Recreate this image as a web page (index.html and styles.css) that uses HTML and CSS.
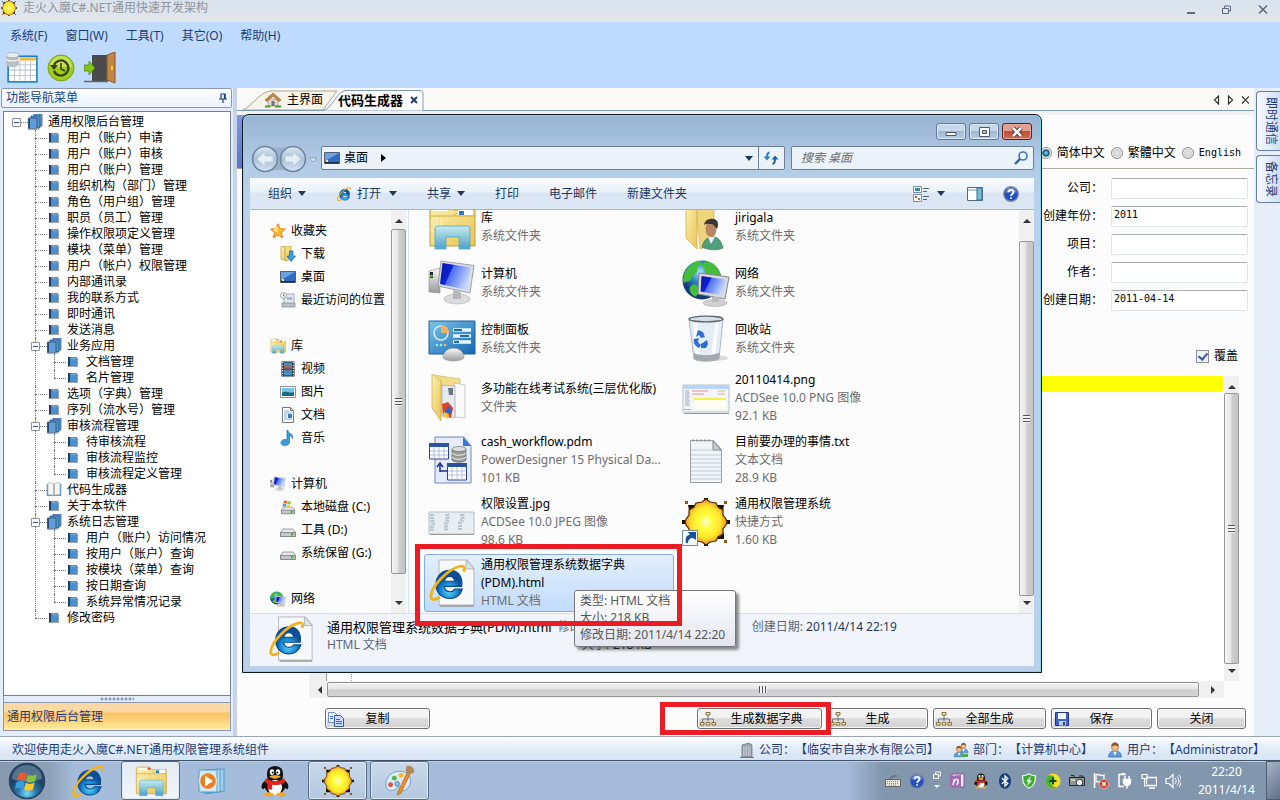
FILE: index.html
```html
<!DOCTYPE html>
<html lang="zh-CN">
<head>
<meta charset="utf-8">
<title>走火入魔C#.NET通用快速开发架构</title>
<link rel="stylesheet" href="styles.css">
</head>
<body>
<svg class="defs" aria-hidden="true">
<defs>
<radialGradient id="gSun"><stop offset="0" stop-color="#fffde0"/><stop offset=".3" stop-color="#ffff3e"/><stop offset=".7" stop-color="#ffe52a"/><stop offset=".85" stop-color="#fbb42c"/><stop offset="1" stop-color="#ee8f24"/></radialGradient>
<linearGradient id="gFolder" x2="1" y2="1"><stop offset="0" stop-color="#fdf2b0"/><stop offset="1" stop-color="#e7c455"/></linearGradient>
<linearGradient id="gGlass" x2="0" y2="1"><stop offset="0" stop-color="#c5ecf6"/><stop offset="1" stop-color="#3f9fd0"/></linearGradient>
<linearGradient id="gScreen" x2="1" y2=".4"><stop offset="0" stop-color="#0a16a8"/><stop offset=".4" stop-color="#0e22d8"/><stop offset=".42" stop-color="#4a6cf0"/><stop offset="1" stop-color="#c4d6ff"/></linearGradient>
<linearGradient id="gGrey" x2="0" y2="1"><stop offset="0" stop-color="#fafafa"/><stop offset="1" stop-color="#9a9a9a"/></linearGradient>
<radialGradient id="gGlobe" cx=".45" cy=".3"><stop offset="0" stop-color="#aee4f4"/><stop offset=".5" stop-color="#2f86c8"/><stop offset="1" stop-color="#123a7c"/></radialGradient>
<linearGradient id="gBlue" x2="1" y2="1"><stop offset="0" stop-color="#7cc4ea"/><stop offset="1" stop-color="#1566b0"/></linearGradient>
<linearGradient id="gPage" x2="1" y2="1"><stop offset="0" stop-color="#ffffff"/><stop offset="1" stop-color="#dfe3ea"/></linearGradient>
<radialGradient id="gE" cx=".5" cy=".75"><stop offset="0" stop-color="#5fd4fa"/><stop offset=".6" stop-color="#1a8ad2"/><stop offset="1" stop-color="#0b4f98"/></radialGradient>
<radialGradient id="gOrb" cx=".5" cy=".85"><stop offset="0" stop-color="#6fe0f4"/><stop offset=".5" stop-color="#2b79ad"/><stop offset="1" stop-color="#1d4468"/></radialGradient>
<linearGradient id="gNavBtn" x2="0" y2="1"><stop offset="0" stop-color="#dbe7f4"/><stop offset=".5" stop-color="#aac0d8"/><stop offset="1" stop-color="#d5e3f1"/></linearGradient>

<symbol id="sun" viewBox="0 0 48 48"><path d="M3 3h3v3H3zM42 3h3v3h-3zM3 42h3v3H3zM42 42h3v3h-3z" fill="#8a5a10"/><path d="M6 7h6v5H7zM36 7h6l-1 6h-5zM6 41v-6h6v6zM42 41h-6v-6h6zM0 22h4v4H0zM44 22h4v4h-4zM22 0h4v3h-4zM22 45h4v3h-4z" fill="#1c1204"/><path d="M24 1l4 3 6 1 2 4 5 3v5l3 4 1 3-1 3-3 4v5l-5 3-2 4-6 1-4 3-4-3-6-1-2-4-5-3v-5l-3-4-1-3 1-3 3-4v-5l5-3 2-4 6-1z" fill="url(#gSun)" stroke="#4a2c08" stroke-width="1.200"/></symbol>
<symbol id="ie" viewBox="0 0 32 32"><path d="M27 19H13.500c.3 2.700 2 4.200 4.600 4.200 1.700 0 2.900-.7 3.700-2h5.800C26 26 22.500 28.500 17.800 28.500 11.500 28.500 7 24 7 17.600S11.600 6.500 17.800 6.500C24.500 6.500 28.200 11.600 27 19zM13.600 15h8c-.3-2.400-1.700-3.700-3.900-3.700-2.200 0-3.600 1.300-4.100 3.700z" fill="url(#gE)" stroke="#0b4a8c" stroke-width=".9"/><path d="M28.500 7.500C30 4 28.500 2.500 25 3.500 16 6 3.500 19 3 26.500c-.2 3.500 3 3.500 7 1" fill="none" stroke="#f3b21a" stroke-width="2.200"/></symbol>
<symbol id="iedoc" viewBox="0 0 48 48"><path d="M11 1h28l7 8v37H11z" fill="#f7f8fa" stroke="#b3b6ba"/><path d="M38 1v9h8z" fill="#dfe2e6" stroke="#b3b6ba"/><path d="M46 47H12" stroke="#9a9a9a" stroke-width="1.500"/><use href="#ie" x="-1" y="3" width="41" height="41"/></symbol>

<symbol id="dbtable" viewBox="0 0 30 30"><rect x="2" y="4" width="27" height="24" fill="#fff" stroke="#1781bd" stroke-width="1.500"/><path d="M13 5h15v3H13z" fill="#f5b63e"/><path d="M3 12h25M3 17h25M3 22h25M8 10v17M13 8v19M18 8v19M23 8v19" stroke="#c3c8d4"/><path d="M0 3v9c1 3 11 3 12 0V3z" fill="#b9bec6"/><path d="M0 7c2 2 10 2 12 0" stroke="#fff" fill="none"/><ellipse cx="6" cy="3" rx="6" ry="2.500" fill="#e9ecf0" stroke="#9aa0aa" stroke-width=".6"/></symbol>
<symbol id="history" viewBox="0 0 28 28"><circle cx="14" cy="14" r="13" fill="#9ccc1c" stroke="#78a512"/><path d="M3 13a11 11 0 0 1 22 0z" fill="#c3e25a"/><path d="M7 17a7.500 7.500 0 1 0 0-6" fill="none" stroke="#38400c" stroke-width="2.200"/><path d="M3 11h8l-4 5z" fill="#38400c"/><path d="M14 9v6l4 2" fill="none" stroke="#38400c" stroke-width="1.600"/></symbol>
<symbol id="door" viewBox="0 0 32 32"><path d="M8 3h16v26H8z" fill="#4a4a4c"/><path d="M0 29.500h24" stroke="#666" stroke-width="1.500"/><path d="M23 3l8-3v31l-8-3z" fill="#c48443" stroke="#8a5a26"/><path d="M28 14v4" stroke="#ffcb2e" stroke-width="2"/><path d="M0 13h5V9l6 7-6 7v-4H0z" fill="#84c512" stroke="#4b850a" stroke-width=".8"/></symbol>
<symbol id="pin" viewBox="0 0 10 10"><path d="M2.500 1h5M3 1v4.500M6.500 1v4.500M7.200 1v4.500M1 6h8M5 6v4" stroke="#123c8c" stroke-width="1.200" fill="none"/></symbol>
<symbol id="books" viewBox="0 0 16 16"><path d="M7 0h8v12H7z" fill="#6aa5da" stroke="#244c74" stroke-width=".7"/><path d="M4 2h9v12H4z" fill="#5594cf" stroke="#1c426c" stroke-width=".7"/><path d="M1.500 4H10v11H1.500z" fill="#5f9dd8" stroke="#1d3f62" stroke-width=".7"/><path d="M1.500 4h1.500v11H1.500z" fill="#2a4a6c"/><path d="M1 15h11" stroke="#8b9aa8"/></symbol>
<symbol id="book" viewBox="0 0 16 16"><path d="M3 3h9v9H3z" fill="#4c8ecb"/><path d="M3 3h2v9H3z" fill="#1f3f60"/><path d="M6 4.500h5" stroke="#7fb5e2"/><path d="M2.500 12.500h10V4" stroke="#8fa0ae" fill="none"/></symbol>
<symbol id="openbook" viewBox="0 0 16 16"><path d="M.7 2h14.600v12H.7z" fill="#5c9cd4"/><path d="M2 1c3-.5 5 0 6 1 1-1 3-1.500 6-1v12c-3-.5-5 0-6 1-1-1-3-1.500-6-1z" fill="#f6f6f6" stroke="#9aa4ae" stroke-width=".6"/><path d="M8 2v12" stroke="#777"/></symbol>
<symbol id="house" viewBox="0 0 16 16"><path d="M3 7h10v7H3z" fill="#e4d9c8" stroke="#8f8271" stroke-width=".6"/><path d="M6.500 9h3v5h-3z" fill="#6d7480"/><path d="M0 8l8-7 8 7-2 1.500L8 4 2 9.500z" fill="#c98642" stroke="#8d5520" stroke-width=".6"/><path d="M0 14.500h5.500M10 14.500h6" stroke="#4c9b32" stroke-width="2"/></symbol>
<symbol id="desk" viewBox="0 0 16 16"><path d="M.5 2.500h15v11H.5z" fill="#2f6cc2" stroke="#56606e"/><path d="M1 3h14L1 11z" fill="#6ba2e4"/><path d="M1 12h14v1.500H1z" fill="#1c2c44"/><path d="M2 10h2v2H2z" fill="#ffe36e"/></symbol>
<symbol id="star" viewBox="0 0 16 16"><path d="M8 .8l2.200 4.800 5.200.5-4 3.500 1.300 5.200L8 12l-4.700 2.800 1.300-5.200-4-3.500 5.200-.5z" fill="#ffb62e" stroke="#e07a12" stroke-width=".9"/><path d="M8 3v7L3 7z" fill="#ffe08a"/></symbol>
<symbol id="down" viewBox="0 0 16 16"><path d="M1 1l5-1h5v12l-4 3-6-2z" fill="url(#gFolder)" stroke="#c39a2e" stroke-width=".7"/><path d="M5 1v13" stroke="#c8a23c"/><path d="M9.500 5h3.500v5h2.500L11.200 15.500 7 10h2.500z" fill="#39a0e4" stroke="#0f62a6" stroke-width=".7"/></symbol>
<symbol id="recent" viewBox="0 0 16 16"><path d="M4 2h10v10H4z" fill="#e6ecf2" stroke="#8a949e" stroke-width=".8"/><path d="M7 5h5v3H7z" fill="#8dbfe4"/><path d="M2 11h13v4H2z" fill="#bcc2c8" stroke="#80878e" stroke-width=".7"/><circle cx="3.500" cy="3.500" r="3" fill="#fff" stroke="#7c8790" stroke-width=".8"/><path d="M3.500 2v2H5" stroke="#444" fill="none" stroke-width=".7"/></symbol>
<symbol id="lib" viewBox="0 0 48 48"><path d="M2 6l2-3h18l3 4h22v36H2z" fill="url(#gFolder)" stroke="#c29a34"/><path d="M6 5h14v3H6zM30 7h15v5H30z" fill="#fff"/><path d="M19 4h4v3h-4z" fill="#e23b22"/><path d="M31 8h5v4h-5z" fill="#2c78c2"/><path d="M2 13h24l3-3h0M27 13h20" stroke="#d0aa3e" fill="none"/><path d="M10 31l-7-13M10 31l-2-16M10 31l4-15M10 31L1 26" stroke="#fffbe0" opacity=".7"/><path d="M7 26q0-3 3-3h29q3 0 3 3v20H31V34H18v12H7z" fill="url(#gGlass)" stroke="#4aa3cc" stroke-width=".8" opacity=".93"/></symbol>
<symbol id="film" viewBox="0 0 16 16"><path d="M1.500.5h13v15h-13z" fill="#20262c"/><path d="M4 1.500h8v6H4zM4 8.500h8v6H4z" fill="#3698d8"/><path d="M4 5l4-2 4 4v.5H4zM5 9l6 1-4 2z" fill="#b1594a"/><path d="M2.700 1v14M13.300 1v14" stroke="#eef2f4" stroke-dasharray="1.500 1.200" stroke-width="1.200"/></symbol>
<symbol id="pic" viewBox="0 0 16 16"><path d="M.5 2.500h15v11H.5z" fill="#fff" stroke="#8b9299"/><path d="M2 4h12v8H2z" fill="#78c2ec"/><path d="M2 9c4-3 7 1 12-1v4H2z" fill="#1a6a86"/></symbol>
<symbol id="doc" viewBox="0 0 16 16"><path d="M2.500.5h8l3 3v12h-11z" fill="#fbfcfd" stroke="#747b83"/><path d="M10.500.5v3h3" fill="none" stroke="#747b83"/><path d="M4 4h5M4 6h8M4 8h3M4 10h3M4 12h8" stroke="#86a4c4" stroke-width=".9"/><path d="M8 7h4v4H8z" fill="#387fb8"/></symbol>
<symbol id="music" viewBox="0 0 16 16"><path d="M8 .5c0 3 6 3.500 4.500 8-.5-2-2-3-3-3v6.500c0 4.500-8.500 4.500-8.500.8 0-2.800 3.700-4 6-2.800V.5z" fill="#3a9ce0" stroke="#1a6cae" stroke-width=".7"/></symbol>
<symbol id="pc" viewBox="0 0 48 48"><path d="M1 12l11-3v25L1 33z" fill="url(#gGrey)" stroke="#888" stroke-width=".6"/><path d="M2 13h3v6H2z" fill="#223"/><circle cx="3.500" cy="17" r="1.300" fill="#53e022"/><ellipse cx="29" cy="40" rx="13" ry="5" fill="#dcdcde" stroke="#aaa" stroke-width=".6"/><path d="M25 31l8 2v7h-8z" fill="#b8b8bc"/><path d="M13 2l33 4.500-4 27.500-32-7z" fill="#dcdde0" stroke="#8c8e92" stroke-width=".8"/><path d="M14.500 4L43 8.500l-4 22.500L12 25z" fill="url(#gScreen)"/></symbol>
<symbol id="winlogo" viewBox="0 0 20 20"><path d="M3 4c2-1.500 4-1.500 6.500 0L8 9.500C6 8 4 8 1.500 9.300z" fill="#ee5a2a"/><path d="M10.500 4.500c2.500 1.200 4.500 1 7-.3L16 9.700c-2.500 1.500-5 1.300-7 0z" fill="#86c440"/><path d="M1.200 10.500c2.300-1.400 4.500-1.200 6.500 0L6.200 16C4.500 14.800 2.500 14.700 0 15.900z" fill="#36a2e0"/><path d="M8.700 10.900c2.500 1.500 4.800 1.300 7-.1L14.300 16.300c-2.500 1.400-5 1.200-7 0z" fill="#ffc92c"/></symbol>
<symbol id="drive" viewBox="0 0 16 16"><path d="M3 7h10l2.500 3.500V14H.5v-3.500z" fill="#e6e8ea" stroke="#787c80" stroke-width=".7"/><path d="M.5 10.500h15v4H.5z" fill="#c4c8cc" stroke="#6a6e72" stroke-width=".7"/><path d="M11 11h2.500v2.500H11z" fill="#3cc41e"/></symbol>
<symbol id="driveC" viewBox="0 0 16 16"><use href="#drive" y="2" width="16" height="14"/><use href="#winlogo" x="2" y="0" width="11" height="10"/></symbol>
<symbol id="net" viewBox="0 0 48 48"><circle cx="20" cy="21" r="19.500" fill="url(#gGlobe)"/><path d="M5 10c6-8 12-9 14-7s-5 5-4 8-5 5-6 9-6 1-7 5c-2-5 0-11 3-15zM27 3c6 1 11 8 12 15-5 1-8-3-13-3s-2-5-5-7 1-6 6-5zM10 26c6-2 11 4 7 8s-2 4-5 3-7-8-2-11z" fill="#44bd3a"/><path d="M17 14l30 4-4 22-27-5z" fill="#d8dade" stroke="#85888c"/><path d="M19.500 17l24 3.500-3.500 16-21.500-4z" fill="url(#gScreen)"/><ellipse cx="33" cy="44" rx="12" ry="3.500" fill="#d0d0d4" stroke="#a0a0a4" stroke-width=".5"/><path d="M30 38h7v5h-7z" fill="#bbb"/></symbol>
<symbol id="userfolder" viewBox="0 0 48 48"><path d="M14 2h18v40l-14 4z" fill="#efd57a" stroke="#c6a748" stroke-width=".6"/><path d="M4 0l11 9v37L4 35z" fill="url(#gFolder)" stroke="#c6a748" stroke-width=".7"/><path d="M20 44c2-8 6-10 11-10s8 3 10 11c-6 3-15 2-21-1z" fill="#4f9f7c" stroke="#2c6e50" stroke-width=".6"/><path d="M26 34l3 7 4-7z" fill="#eef"/><ellipse cx="29" cy="26" rx="5.500" ry="8" fill="#b98562"/><path d="M22 22c1-8 14-8 14-1 0 3-1 4-1 5-2-3-4-5-6-5s-5-1-7 1z" fill="#3a3634"/></symbol>
<symbol id="panel" viewBox="0 0 48 48"><path d="M1 6h46v33H1z" fill="url(#gBlue)" stroke="#1b619c"/><circle cx="13" cy="18" r="7" fill="none" stroke="#d9effc" stroke-width="1.500"/><path d="M13 18V10a8 8 0 0 1 8 8z" fill="#f5b05a"/><path d="M25 15h18M25 21h18M25 27h18" stroke="#e8f6ff" stroke-width="3.500"/><path d="M26 15h8M32 21h9M26 27h5" stroke="#1e6cb4" stroke-width="2"/><circle cx="9" cy="30" r="1.300" fill="#7ff0ff"/><circle cx="13" cy="30" r="1.300" fill="#7ff0ff"/><circle cx="17" cy="30" r="1.300" fill="#ffb55a"/><path d="M15 43c0-13 21-13 21 0-4 4-17 4-21 0z" fill="url(#gGrey)" stroke="#999" stroke-width=".6"/></symbol>
<symbol id="bin" viewBox="0 0 48 48"><ellipse cx="33" cy="43" rx="13" ry="3" fill="#ccc" opacity=".7"/><path d="M7 4h34l-4 40c-6 3-20 3-25 0z" fill="#e4edf6" stroke="#aeb7bf"/><path d="M13 8l3 34M35 8l-4 34" stroke="#fff" stroke-width="4" opacity=".8"/><path d="M12 38c6 3 20 3 26-1l-1 7c-6 3-20 3-25 0z" fill="#a5a9ae"/><ellipse cx="24" cy="4" rx="17" ry="2.800" fill="#d7e0e8" stroke="#5d646c" stroke-width="1.300"/><path d="M16 15l5 2 2 5-4 1-2-3-3 2zM12 24l5-1-1 4 3 3-2 3c-4-2-6-5-5-9zM19 33v-4l6-4 1 4-2 4z" fill="#2f6fd0"/></symbol>
<symbol id="appfolder" viewBox="0 0 48 48"><path d="M6 1l26 4v34H12z" fill="#f3dc88" stroke="#c9aa4e" stroke-width=".6"/><path d="M26 9l11 2v33l-10-1z" fill="#fafafa" stroke="#b5b8bc" stroke-width=".7"/><path d="M14 11l13 1v32l-13-2z" fill="#e6e9ed" stroke="#9ea3aa" stroke-width=".7"/><path d="M20 14h5v7h-4z" fill="#6c7480"/><path d="M14 30l6-2 5 6-2 10-8-4z" fill="#e0402e"/><path d="M20 32l4 4-3 6-4-4z" fill="#2b62c4"/><path d="M16 38l5 2-1 5-5-3z" fill="#ffc42a"/><path d="M4 0l9 7v40L4 34z" fill="url(#gFolder)" stroke="#c9aa4e" stroke-width=".7"/></symbol>
<symbol id="pngshot" viewBox="0 0 48 48"><path d="M1 11h46v27H1z" fill="#f3f5f8" stroke="#b4c0ce"/><path d="M1 11h46v4H1z" fill="#b8d4f6"/><path d="M3 17h4M3 19h5M3 21h4M3 23h5M3 25h4M3 27h5M3 29h4M3 31h5" stroke="#8d98a6" stroke-width=".8"/><path d="M10 17h16M10 20h12" stroke="#e06464" opacity=".7"/><path d="M12 25h32" stroke="#f4ee16" stroke-width="1.500"/><path d="M12 26h32v9H12z" fill="#fffef2"/><path d="M36 17h7M36 20h7M1 35.500h8" stroke="#c9b99c"/><path d="M2 39.500h45" stroke="#999"/></symbol>
<symbol id="pdm" viewBox="0 0 48 48"><path d="M7 1h29l7 9v37H7z" fill="#e4ecfb" stroke="#7186ba"/><path d="M35 1v9h8z" fill="#3778d0"/><g fill="#fff" stroke="#2a3f9c"><path d="M1.500 8h19v15h-19zM19.500 28h19v16h-19z"/></g><path d="M1 7h20v4H1zM19 27h20v4H19z" fill="#2a559e"/><path d="M2 15h18M2 19h18M6 11v12M11 11v12M16 11v12M20 35h18M20 39h18M24 31v13M29 31v13M34 31v13" stroke="#a6aed8" stroke-width=".8"/><path d="M12 36V29M9 31l3-4 3 4M12 35h7" stroke="#1b2d96" fill="none" stroke-width="1.500"/><path d="M24 13v11c2 3 12 3 14 0V13z" fill="#9a9a98" stroke="#555" stroke-width=".6"/><ellipse cx="31" cy="13" rx="7" ry="2.500" fill="#dedede" stroke="#666" stroke-width=".6"/><path d="M24 17c2 3 12 3 14 0M24 21c2 3 12 3 14 0" fill="none" stroke="#f2f2f2"/></symbol>
<symbol id="txt" viewBox="0 0 48 48"><path d="M8.500 4.500h23l8 9v33h-31z" fill="#f2f5f8" stroke="#9aa0a6"/><path d="M31 5v9h8z" fill="#cbd0d6" stroke="#7f858b"/><path d="M10 4.500h20" stroke="#999" stroke-dasharray="2 2" stroke-width="2"/><path d="M9 14h22M9 19h30M9 23h30M9 27h30M9 31h30M9 35h30M9 39h30M9 43h30" stroke="#bccbdb"/></symbol>
<symbol id="jpgshot" viewBox="0 0 48 48"><path d="M1 14h45v22H1z" fill="#e7edf1" stroke="#b6bfc8"/><path d="M4 16v5l1 5-1 3v4M19 16l1 5-2 5v7M34 16l1 5-3 4v7" stroke="#b8c2ca" stroke-width="4" stroke-dasharray="2 1" fill="none"/><path d="M2 36.500h44" stroke="#999"/></symbol>
<symbol id="shortcut" viewBox="0 0 48 48"><use href="#sun" width="48" height="48"/><path d="M.5 32.500h15v15H.5z" fill="#f4f7fb" stroke="#7a8896"/><path d="M4 45c-1-6 1-8 4-8l-2-3h8v8l-3-2c-3 0-5 2-5 5z" fill="#174f9c"/></symbol>
<symbol id="copy" viewBox="0 0 16 16"><path d="M.5 1.500h6l3 3v7h-9z" fill="#eaf1fd" stroke="#6d8fd0"/><path d="M6.500 4.500h6l3 3v8h-9z" fill="#c9dafa" stroke="#2e58b2"/><path d="M8 8.500h4M8 10.500h6M8 12.500h6M2 5.500h3M2 7.500h3" stroke="#3a68c4"/></symbol>
<symbol id="org" viewBox="0 0 16 16"><path d="M8 4v6M2.500 11V8h11v3" fill="none" stroke="#677"/><g fill="#fff0a0" stroke="#6b5420" stroke-width=".8"><path d="M6 1.500h4v2.500H6zM.5 11.500h3.500v2.500H.5zM6.200 11.500h3.600v2.500H6.200zM12 11.500h3.500v2.500H12z"/></g></symbol>
<symbol id="save" viewBox="0 0 16 16"><path d="M1.500 1.500h13v13h-13z" fill="#3f62cc" stroke="#1d3584"/><path d="M4 2h8v6H4z" fill="#f2f6ff"/><path d="M5 10h7v4.500H5z" fill="#c5cee0"/><path d="M9 11h2v3H9z" fill="#233f8c"/></symbol>
<symbol id="building" viewBox="0 0 16 16"><path d="M3 3l7-2 3 2v12H3z" fill="#9aa2ae" stroke="#66707c" stroke-width=".7"/><path d="M4 5h8M4 7h8M4 9h8M4 11h8M4 13h8" stroke="#dfe5ee" stroke-dasharray="1.500 1"/><path d="M1 15.500h14" stroke="#777"/></symbol>
<symbol id="person" viewBox="0 0 16 16"><path d="M1.500 15c.5-5 3-6 6.500-6s6 1 6.500 6z" fill="#5c9fdf" stroke="#2c659c" stroke-width=".7"/><path d="M6 9.500l2 4 2-4z" fill="#fff"/><ellipse cx="8" cy="5" rx="3.300" ry="4.200" fill="#f0bd8a" stroke="#8c5a30" stroke-width=".6"/><path d="M4.500 4.500C4-.5 12-.5 11.500 4.500 10 3 6 3 4.500 4.500z" fill="#8a5024"/></symbol>
<symbol id="people" viewBox="0 0 16 16"><use href="#person" x="5" y="0" width="11" height="12"/><use href="#person" x="0" y="3" width="12" height="13"/><path d="M9 12h6v3H9z" fill="#4faa42"/></symbol>
<symbol id="orb" viewBox="0 0 38 38"><circle cx="19" cy="19" r="17.500" fill="url(#gOrb)" stroke="#27435e" stroke-width="1.500"/><path d="M4 17a15 14 0 0 1 30 0c-8 3-22 3-30 0z" fill="#fff" opacity=".25"/><use href="#winlogo" x="7" y="7" width="25" height="25"/></symbol>
<symbol id="wmp" viewBox="0 0 32 32"><path d="M10 5l18-1v22l-18 3z" fill="#9fd0ea" stroke="#4e9cc6"/><path d="M7 5l17-1v23L7 28z" fill="#b8def0" stroke="#4e9cc6"/><path d="M3 5h18v22H3z" fill="#cfe9f5" stroke="#4e9cc6"/><circle cx="12" cy="16" r="8.500" fill="#f07c1c" stroke="#d8e8f0" stroke-width="1.500"/><path d="M9 10.500l8 5.500L9 21.500z" fill="#fff"/></symbol>
<symbol id="qq" viewBox="0 0 32 34"><path d="M6 16C1 20 1 24 3 26l4-3M26 16c5 4 5 8 3 10l-4-3" fill="#111"/><ellipse cx="16" cy="22" rx="11" ry="10" fill="#151515"/><ellipse cx="16" cy="24" rx="7.500" ry="8" fill="#fff"/><path d="M16 1c-6 0-8.500 4-8.500 8 0 3 0 5 1.500 7h14c1.500-2 1.500-4 1.500-7 0-4-2.500-8-8.500-8z" fill="#151515"/><ellipse cx="12.800" cy="7.500" rx="2.300" ry="3" fill="#fff"/><ellipse cx="19.200" cy="7.500" rx="2.300" ry="3" fill="#fff"/><circle cx="13.500" cy="8" r="1"/><circle cx="18.500" cy="8" r="1"/><path d="M10 12c3-1.500 9-1.500 12 0-2 3.500-10 3.500-12 0z" fill="#f9a91c"/><path d="M6 14c6 4 14 4 20 0l1 4c-5 3-9 4-14 3v5H8v-6l-3-2z" fill="#e2231c"/><path d="M4 32c0-4 9-4 11-1-1 3-9 3-11 1zM28 32c0-4-9-4-11-1 1 3 9 3 11 1z" fill="#f9a91c"/></symbol>
<symbol id="paint" viewBox="0 0 34 34"><path d="M2 22C1 11 11 5 20 7c8 2 10 10 7 15-4 7-9 6-9 3s-3-3-5 0-10 4-11-3z" fill="#dceaf4" stroke="#6a9cc0"/><circle cx="7" cy="21" r="2.600" fill="#e05038"/><circle cx="11" cy="14" r="2.600" fill="#57b447"/><circle cx="18" cy="11" r="2.600" fill="#f4b52c"/><circle cx="14" cy="20" r="2.500" fill="#8cc3e8" stroke="#4a88b8"/><path d="M29 7l-11 23-4 2 1-4L26 5z" fill="#e88c2c" stroke="#a85c14" stroke-width=".6"/><path d="M24 1c4-1 9 2 8 7l-6 2-3-4z" fill="#b5855a"/></symbol>
<symbol id="kbd" viewBox="0 0 16 16"><path d="M.5 6.500h15v7H.5z" fill="#e8e4da" stroke="#666"/><path d="M2 8.500h12M2 10.500h12M4 12h8" stroke="#888" stroke-dasharray="1 1"/><path d="M5 6c0-3 3-1 3-3h4" stroke="#555" fill="none"/></symbol>
<symbol id="help" viewBox="0 0 16 16"><circle cx="8" cy="8" r="7.300" fill="#244fc0" stroke="#808a9c" stroke-width="1.400"/><path d="M2.500 6.500a5.500 5 0 0 1 11 0z" fill="#7f9ee8" opacity=".7"/><path d="M5.500 6.300c0-3.300 5-3.300 5-.3 0 2-2.400 1.900-2.400 3.900M8 11.200v1.600" stroke="#fff" stroke-width="1.800" fill="none"/></symbol>
<symbol id="note" viewBox="0 0 16 16"><path d="M3 1h12v13H3z" fill="#f4e9f6" stroke="#8a5a98"/><path d="M1 3l11-1v13L1 14z" fill="#a46ab2"/><path d="M4 12l1.500-6M5 9c2-4 5-3 4 0l-1 3" stroke="#fff" fill="none" stroke-width="1.500"/></symbol>
<symbol id="bt" viewBox="0 0 16 16"><ellipse cx="8" cy="8" rx="6" ry="7.800" fill="#143c7a"/><path d="M4.800 5l6 5.500L8 13V3l2.800 2.500-6 5.500" stroke="#fff" stroke-width="1.300" fill="none"/></symbol>
<symbol id="shield" viewBox="0 0 16 16"><path d="M8 .8c2 1.500 4 2 6.500 2 0 6-1 9.500-6.500 12.500C2.500 12.300 1.500 8.800 1.500 2.800 4 2.800 6 2.300 8 .8z" fill="#3cae2c" stroke="#e8f4e4" stroke-width="1.300"/><path d="M10 3L5 8.500h2.500L6 13l5-5.500H8.500z" fill="#fff"/></symbol>
<symbol id="plus" viewBox="0 0 16 16"><circle cx="8" cy="8" r="7.500" fill="#f6df22"/><path d="M.5 8a7.500 7.500 0 0 0 12 5.800C8 15 4 11 8 8s0-7-5-5.500A7.500 7.500 0 0 0 .5 8z" fill="#4db32e"/><path d="M8 4.500v7M4.500 8h7" stroke="#15480e" stroke-width="2"/></symbol>
<symbol id="cam" viewBox="0 0 16 16"><path d="M.5 4.500h15v8H.5zM2 2.500h3v2M10 3h4v1.500" fill="#8e9492" stroke="#23282a"/><circle cx="10.500" cy="9.500" r="3.300" fill="#eee" stroke="#333"/><path d="M2 7h4" stroke="#fff"/></symbol>
<symbol id="flag" viewBox="0 0 16 16"><path d="M1.500 0v15" stroke="#fff" stroke-width="1.500"/><path d="M3 2c3-2 4 2 8 0v7c-4 2-5-2-8 0z" fill="none" stroke="#fff" stroke-width="1.300"/><circle cx="11" cy="11" r="4.700" fill="#d63822" stroke="#f6c5bd" stroke-width=".7"/><path d="M9 9l4 4M13 9l-4 4" stroke="#fff" stroke-width="1.500"/></symbol>
<symbol id="plug" viewBox="0 0 16 16"><path d="M9 1.500H2v12h5M4 .7h4" fill="none" stroke="#fff" stroke-width="1.500"/><path d="M6.500 6.500h7v3l-1.500 2.500h-4L6.500 9.500zM8 3v3M12 3v3M10 12v3.500" fill="#fff" stroke="#fff" stroke-width="1.400"/></symbol>
<symbol id="lan" viewBox="0 0 16 16"><path d="M5.500 4.500h10v8h-10zM8 15h6" fill="none" stroke="#fff" stroke-width="1.300"/><path d="M1 1.500h5v4H1zM3.500 5.500V13H6" fill="#8396ae" stroke="#fff" stroke-width="1.200"/></symbol>
<symbol id="vol" viewBox="0 0 16 16"><path d="M1 5.500h3l4-4v13l-4-4H1z" fill="none" stroke="#fff" stroke-width="1.200"/><path d="M10 5c1.500 1.500 1.500 4.500 0 6M12 3.500c2.500 2.500 2.500 6.500 0 9M14 2c3 4 3 8 0 12" stroke="#fff" fill="none"/></symbol>
<symbol id="views" viewBox="0 0 16 16"><g fill="#fff" stroke="#7d8ea0"><path d="M.5.5h8v6h-8zM.5 8.500h8v7h-8z"/></g><path d="M2 2h5v3H2z" fill="#2c8ca8"/><path d="M2 10h2v2H2z" fill="#d33"/><path d="M5 12h2v2H5z" fill="#5a2"/><path d="M10 2.500h6M10 5.500h4M10 10.500h6M10 13.500h4" stroke="#52606e"/></symbol>
<symbol id="pane" viewBox="0 0 16 16"><path d="M.5 1.500h15v13H.5z" fill="#fff" stroke="#54687c"/><path d="M1 4h9" stroke="#7f94a8"/><path d="M10 2h5v12h-5z" fill="#73bcd8" stroke="#32708e"/></symbol>
<symbol id="refresh" viewBox="0 0 16 16"><path d="M6.500 2.500C4 3 4 5 4 7" fill="none" stroke="#2d84c6" stroke-width="2"/><path d="M.5 6.500h7L4 10.500z" fill="#2d84c6"/><path d="M9.500 14c2.500-.5 2.500-2.500 2.500-5" fill="none" stroke="#1b65a8" stroke-width="2"/><path d="M8.500 9.500h7L12 5.500z" fill="#1b65a8"/></symbol>
<symbol id="mag" viewBox="0 0 16 16"><circle cx="10" cy="6" r="4" fill="#eaf4fc" stroke="#3878c0" stroke-width="1.600"/><path d="M7 9l-5 5" stroke="#2863ae" stroke-width="2.400"/></symbol>
</defs>
</svg>

<div class="screen">
<header class="titlebar"><svg class="i16"><use href="#sun"/></svg><span class="title">走火入魔C#.NET通用快速开发架构</span>
<span class="winctl"><button aria-label="最小化"><svg viewBox="0 0 12 12"><path d="M2 9h8" stroke-width="2"/></svg></button><button aria-label="还原"><svg viewBox="0 0 12 12"><path d="M3.500 4V2h6v5H8M1.500 4.500h6v5h-6z"/></svg></button><button aria-label="关闭"><svg viewBox="0 0 12 12"><path d="M2 1.500l8 8M10 1.500l-8 8" stroke-width="1.600"/></svg></button></span></header>
<nav class="menubar"><button>系统(F)</button><button>窗口(W)</button><button>工具(T)</button><button>其它(O)</button><button>帮助(H)</button></nav>
<div class="toolbar"><button aria-label="数据表"><svg><use href="#dbtable"/></svg></button><button aria-label="历史"><svg><use href="#history"/></svg></button><button aria-label="退出"><svg><use href="#door"/></svg></button></div>

<div class="main">
<aside class="sidebar">
<div class="side-head"><span>功能导航菜单</span><svg><use href="#pin"/></svg></div>
<div class="tree">
<ul class="root"><li><div class="row"><i class="exp"></i><svg><use href="#books"/></svg><span>通用权限后台管理</span></div>
<ul>
<li><div class="row"><svg><use href="#book"/></svg><span>用户（账户）申请</span></div></li>
<li><div class="row"><svg><use href="#book"/></svg><span>用户（账户）审核</span></div></li>
<li><div class="row"><svg><use href="#book"/></svg><span>用户（账户）管理</span></div></li>
<li><div class="row"><svg><use href="#book"/></svg><span>组织机构（部门）管理</span></div></li>
<li><div class="row"><svg><use href="#book"/></svg><span>角色（用户组）管理</span></div></li>
<li><div class="row"><svg><use href="#book"/></svg><span>职员（员工）管理</span></div></li>
<li><div class="row"><svg><use href="#book"/></svg><span>操作权限项定义管理</span></div></li>
<li><div class="row"><svg><use href="#book"/></svg><span>模块（菜单）管理</span></div></li>
<li><div class="row"><svg><use href="#book"/></svg><span>用户（帐户）权限管理</span></div></li>
<li><div class="row"><svg><use href="#book"/></svg><span>内部通讯录</span></div></li>
<li><div class="row"><svg><use href="#book"/></svg><span>我的联系方式</span></div></li>
<li><div class="row"><svg><use href="#book"/></svg><span>即时通讯</span></div></li>
<li><div class="row"><svg><use href="#book"/></svg><span>发送消息</span></div></li>
<li><div class="row"><i class="exp"></i><svg><use href="#books"/></svg><span>业务应用</span></div>
<ul>
<li><div class="row"><svg><use href="#book"/></svg><span>文档管理</span></div></li>
<li><div class="row"><svg><use href="#book"/></svg><span>名片管理</span></div></li>
</ul></li>
<li><div class="row"><svg><use href="#book"/></svg><span>选项（字典）管理</span></div></li>
<li><div class="row"><svg><use href="#book"/></svg><span>序列（流水号）管理</span></div></li>
<li><div class="row"><i class="exp"></i><svg><use href="#books"/></svg><span>审核流程管理</span></div>
<ul>
<li><div class="row"><svg><use href="#book"/></svg><span>待审核流程</span></div></li>
<li><div class="row"><svg><use href="#book"/></svg><span>审核流程监控</span></div></li>
<li><div class="row"><svg><use href="#book"/></svg><span>审核流程定义管理</span></div></li>
</ul></li>
<li><div class="row"><svg><use href="#openbook"/></svg><span>代码生成器</span></div></li>
<li><div class="row"><svg><use href="#book"/></svg><span>关于本软件</span></div></li>
<li><div class="row"><i class="exp"></i><svg><use href="#books"/></svg><span>系统日志管理</span></div>
<ul>
<li><div class="row"><svg><use href="#book"/></svg><span>用户（账户）访问情况</span></div></li>
<li><div class="row"><svg><use href="#book"/></svg><span>按用户（账户）查询</span></div></li>
<li><div class="row"><svg><use href="#book"/></svg><span>按模块（菜单）查询</span></div></li>
<li><div class="row"><svg><use href="#book"/></svg><span>按日期查询</span></div></li>
<li><div class="row"><svg><use href="#book"/></svg><span>系统异常情况记录</span></div></li>
</ul></li>
<li><div class="row"><svg><use href="#book"/></svg><span>修改密码</span></div></li>
</ul></li></ul>
</div>
<div class="grip"></div>
<button class="side-tab">通用权限后台管理</button>
</aside>

<section class="center">
<div class="tabs">
<svg class="tabshape" viewBox="0 0 192 23"><path d="M6 22C16 17 24 3 34 3h66L86 22z" fill="#f7f5ea" stroke="#aaa793"/><path d="M0 22.500h86C96 20 100 2.500 109 2.500h74q3 0 3 3v17" fill="#fdfdfb" stroke="#7d9dbd"/></svg>
<button class="tab"><svg class="i16"><use href="#house"/></svg>主界面</button>
<button class="tab on">代码生成器<svg class="x" viewBox="0 0 8 8"><path d="M1 1l6 6M7 1L1 7" stroke="#24406c" stroke-width="2"/></svg></button>
<span class="tabctl"><svg viewBox="0 0 36 10"><path d="M5.500 1v8l-4-4zM15.500 1v8l4-4zM29 1.500l7 7M36 1.500l-7 7" fill="none" stroke="#333" stroke-width="1.200"/></svg></span>
</div>
<div class="form">
<div class="form-top"><div class="banner"></div>
<div class="radios"><label><input type="radio" name="lang" checked>简体中文</label><label><input type="radio" name="lang">繁體中文</label><label><input type="radio" name="lang"><span class="mono">English</span></label></div></div>
<div class="fields">
<label for="f1">公司：</label><input id="f1" type="text">
<label for="f2">创建年份：</label><input id="f2" type="text" value="2011">
<label for="f3">项目：</label><input id="f3" type="text">
<label for="f4">作者：</label><input id="f4" type="text">
<label for="f5">创建日期：</label><input id="f5" type="text" value="2011-04-14">
</div>
<div class="cover"><label><input type="checkbox" checked>覆盖</label></div>
<div class="editor">
<div class="code"><div class="gutter"></div><div class="lines"><div class="hl"></div></div></div>
<div class="sb v ed"><i class="up"></i><b></b><i class="dn"></i></div>
<div class="sb h"><i class="lt"></i><b></b><i class="rt"></i></div>
</div>
<div class="actions">
<button class="btn w105"><svg class="i16"><use href="#copy"/></svg><span>复制</span></button><span class="grow"></span>
<button class="btn w125"><svg class="i16"><use href="#org"/></svg><span>生成数据字典</span></button>
<button class="btn w101"><svg class="i16"><use href="#org"/></svg><span>生成</span></button>
<button class="btn w113"><svg class="i16"><use href="#org"/></svg><span>全部生成</span></button>
<button class="btn w101"><svg class="i16"><use href="#save"/></svg><span>保存</span></button>
<button class="btn w89"><span>关闭</span></button>
</div>
</div>
</section>
<aside class="dock"><button>即时通信</button><button>备忘录</button></aside>
</div>

<footer class="status"><span>欢迎使用走火入魔C#.NET通用权限管理系统组件</span><span class="grow"></span>
<span class="st"><svg class="i16"><use href="#building"/></svg>公司：【临安市自来水有限公司】</span>
<span class="st"><svg class="i16"><use href="#people"/></svg>部门：【计算机中心】</span>
<span class="st"><svg class="i16"><use href="#person"/></svg>用户：【Administrator】</span></footer>

<div class="taskbar">
<button class="task" aria-label="开始"><svg class="i38"><use href="#orb"/></svg></button>
<button class="task ie" aria-label="Internet Explorer"><svg class="i36"><use href="#ie"/></svg></button>
<button class="task act cur" aria-label="资源管理器"><svg><use href="#lib"/></svg></button>
<button class="task" aria-label="播放器"><svg><use href="#wmp"/></svg></button>
<button class="task" aria-label="QQ"><svg><use href="#qq"/></svg></button>
<button class="task act" aria-label="开发架构"><svg><use href="#sun"/></svg></button>
<button class="task act" aria-label="画图"><svg><use href="#paint"/></svg></button>
<span class="grow"></span>
<div class="tray"><svg><use href="#kbd"/></svg><svg><use href="#help"/></svg><svg class="lang" viewBox="0 0 8 20"><path d="M2.500 3V1h5v4H6M.5 3.500h5v4h-5z" fill="none" stroke="#fff"/><path d="M1 14h6l-3 3z" fill="#fff"/></svg><svg><use href="#note"/></svg><svg><use href="#qq"/></svg><svg><use href="#bt"/></svg><svg><use href="#shield"/></svg><svg><use href="#plus"/></svg><svg><use href="#cam"/></svg><svg><use href="#flag"/></svg><svg><use href="#plug"/></svg><svg><use href="#lan"/></svg><svg><use href="#vol"/></svg></div>
<div class="clock">22:20<br>2011/4/14</div><div class="peek"></div>
</div>

<section class="explorer">
<div class="xtitle"><button aria-label="最小化"><svg viewBox="0 0 12 12"><path d="M1 6.500h10v3H1z" fill="#fff" stroke="#4c5a6c"/></svg></button><button aria-label="最大化"><svg viewBox="0 0 12 12"><path d="M1.500 1.500h10v9h-10z" fill="#fff" stroke="#4c5a6c"/><path d="M4.500 4.500h4v3h-4z" fill="#a9bdd4" stroke="#4c5a6c"/></svg></button><button class="close" aria-label="关闭"><svg viewBox="0 0 12 12"><path d="M2 2l8 8M10 2l-8 8" stroke="#5b3030" stroke-width="4.500"/><path d="M2 2l8 8M10 2l-8 8" stroke="#fff" stroke-width="2.500"/></svg></button></div>
<div class="xnav">
<svg class="backfwd" viewBox="0 0 66 28"><path d="M14 1q14 4 28 0v26q-14-4-28 0z" fill="#98b0ca"/><circle cx="14" cy="14" r="12.500" fill="url(#gNavBtn)" stroke="#6c839e" stroke-width="1.500"/><circle cx="42" cy="14" r="12.500" fill="url(#gNavBtn)" stroke="#6c839e" stroke-width="1.500"/><path d="M6 14l8-7v4h8v6h-8v4zM50 14l-8-7v4h-8v6h8v4z" fill="#e6eef6" stroke="#b8cadc" stroke-width=".7"/><path d="M58 13h8l-4 4z" fill="#d7e4f2" stroke="#8198b4" stroke-width=".8"/></svg>
<div class="addr"><svg class="i16"><use href="#desk"/></svg><span>桌面</span><i class="ar"></i><span class="grow"></span><i class="ad"></i><button aria-label="刷新"><svg class="i16"><use href="#refresh"/></svg></button></div>
<div class="search"><input type="text" placeholder="搜索 桌面" aria-label="搜索"><svg class="i16"><use href="#mag"/></svg></div>
</div>
<div class="xtool"><button>组织<i class="ad"></i></button><button class="open"><svg class="i16"><use href="#ie"/></svg>打开<i class="ad wide"></i></button><button>共享<i class="ad"></i></button><button>打印</button><button>电子邮件</button><button>新建文件夹</button><span class="grow"></span><button aria-label="视图"><svg class="i16"><use href="#views"/></svg><i class="ad wide"></i></button><button class="p1" aria-label="预览"><svg class="i16"><use href="#pane"/></svg></button><button class="p2" aria-label="帮助"><svg class="i16"><use href="#help"/></svg></button></div>
<div class="xbody">
<div class="places">
<ul><li class="h"><svg><use href="#star"/></svg>收藏夹</li><li><svg><use href="#down"/></svg>下载</li><li><svg><use href="#desk"/></svg>桌面</li><li><svg><use href="#recent"/></svg>最近访问的位置</li></ul>
<ul><li class="h"><svg><use href="#lib"/></svg>库</li><li><svg><use href="#film"/></svg>视频</li><li><svg><use href="#pic"/></svg>图片</li><li><svg><use href="#doc"/></svg>文档</li><li><svg><use href="#music"/></svg>音乐</li></ul>
<ul><li class="h"><svg><use href="#pc"/></svg>计算机</li><li><svg><use href="#driveC"/></svg>本地磁盘 (C:)</li><li><svg><use href="#drive"/></svg>工具 (D:)</li><li><svg><use href="#drive"/></svg>系统保留 (G:)</li></ul>
<ul><li class="h"><svg><use href="#net"/></svg>网络</li></ul>
</div>
<div class="sb v pl"><i class="up"></i><b></b><i class="dn"></i></div>
<div class="files"><div class="grid">
<div class="f"><svg><use href="#lib"/></svg><p>库<small>系统文件夹</small></p></div>
<div class="f"><svg><use href="#userfolder"/></svg><p>jirigala<small>系统文件夹</small></p></div>
<div class="f"><svg><use href="#pc"/></svg><p>计算机<small>系统文件夹</small></p></div>
<div class="f"><svg><use href="#net"/></svg><p>网络<small>系统文件夹</small></p></div>
<div class="f"><svg><use href="#panel"/></svg><p>控制面板<small>系统文件夹</small></p></div>
<div class="f"><svg><use href="#bin"/></svg><p>回收站<small>系统文件夹</small></p></div>
<div class="f"><svg><use href="#appfolder"/></svg><p>多功能在线考试系统(三层优化版)<small>文件夹</small></p></div>
<div class="f"><svg><use href="#pngshot"/></svg><p>20110414.png<small>ACDSee 10.0 PNG 图像</small><small>92.1 KB</small></p></div>
<div class="f"><svg><use href="#pdm"/></svg><p>cash_workflow.pdm<small>PowerDesigner 15 Physical Da...</small><small>101 KB</small></p></div>
<div class="f"><svg><use href="#txt"/></svg><p>目前要办理的事情.txt<small>文本文档</small><small>28.9 KB</small></p></div>
<div class="f"><svg><use href="#jpgshot"/></svg><p>权限设置.jpg<small>ACDSee 10.0 JPEG 图像</small><small>98.6 KB</small></p></div>
<div class="f"><svg><use href="#shortcut"/></svg><p>通用权限管理系统<small>快捷方式</small><small>1.60 KB</small></p></div>
<div class="f sel"><svg><use href="#iedoc"/></svg><p>通用权限管理系统数据字典<br>(PDM).html<small>HTML 文档</small></p></div>
</div></div>
<div class="sb v fl"><i class="up"></i><b></b><i class="dn"></i></div>
</div>
<div class="xinfo"><svg><use href="#iedoc"/></svg><div class="dname"><strong>通用权限管理系统数据字典(PDM).html</strong><span>HTML 文档</span></div><div class="dmeta"><span>修改日期:</span><em>2011/4/14 22:20</em><span>大小:</span><em>218 KB</em></div><div class="dmade">创建日期: <em>2011/4/14 22:19</em></div></div>
</section>
<div class="tip" role="tooltip">类型: HTML 文档<br>大小: 218 KB<br>修改日期: 2011/4/14 22:20</div>
<div class="mark m1"></div>
<div class="mark m2"></div>
</div>
</body>
</html>
```
FILE: styles.css
```css
* { box-sizing: border-box; }
body { margin: 0; font: 12px/16px "Noto Sans", "Noto Sans CJK SC", sans-serif; color: #000; text-spacing-trim: space-all; }
button, input { font: inherit; color: inherit; text-spacing-trim: inherit; }
button { border: 0; padding: 0; background: none; white-space: nowrap; }
ul { list-style: none; margin: 0; padding: 0; }
svg { flex: none; display: block; }
em, i { font-style: normal; }
.defs { position: absolute; width: 0; height: 0; }
.i16 { width: 16px; height: 16px; }
.grow { flex: 1; }
.screen { position: relative; height: 100vh; min-height: 600px; overflow: hidden; display: flex; flex-direction: column; background: #bfdbff; }

.titlebar { height: 22px; flex: none; display: flex; align-items: center; padding: 0 11px 6px 1px; background: linear-gradient(#d9e3ee, #e3e6ec); color: #8f959d; }
.titlebar .title { margin-left: 6px; flex: 1; }
.winctl { display: flex; gap: 24px; padding-top: 4px; }
.winctl svg { width: 12px; height: 12px; fill: none; stroke: #5d6b7c; }
.menubar { height: 26px; flex: none; display: flex; gap: 18px; padding: 1px 10px 0; color: #1d3c73; }
.toolbar { height: 40px; flex: none; display: flex; gap: 11px; padding: 3px 6px; }
.toolbar svg { width: 32px; height: 32px; }
.toolbar button:nth-child(2) svg { width: 28px; margin-left: -2px; margin-right: -2px; }

.main { flex: 1; min-height: 0; display: flex; background: #e6eefa; }
.sidebar { width: 233px; flex: none; display: flex; flex-direction: column; padding: 0 1px; background: #e3ecf9; }
.side-head { height: 20px; flex: none; display: flex; align-items: center; justify-content: space-between; border: 1px solid #8d98b0; border-radius: 2px; background: linear-gradient(#fff, #eaf2fc); padding: 0 3px 0 4px; color: #15428b; }
.side-head svg { width: 10px; height: 10px; }
.tree { flex: 1; min-height: 0; overflow: hidden; margin: 3px 1px 0 2px; border: 1px solid #6f7f9c; background: #fff; padding: 2px 0 0 6px; }
.tree li { position: relative; }
.tree li ul { margin-left: 19px; }
.tree .row { position: relative; height: 16px; display: flex; align-items: center; padding-left: 12px; white-space: nowrap; }
.tree .row::before { content: ""; position: absolute; left: 6px; top: 8px; width: 12px; border-top: 1px dotted #777; }
.tree .row svg { position: relative; width: 16px; height: 16px; margin: 0 5px 0 5px; }
.tree .exp { position: absolute; left: 2px; top: 4px; z-index: 1; width: 9px; height: 9px; border: 1px solid #8b8f96; border-radius: 1px; background: linear-gradient(#2b4fa0, #2b4fa0) center/5px 1px no-repeat #fff; }
.tree li li::before { content: ""; position: absolute; left: 6px; top: 0; bottom: 0; border-left: 1px dotted #777; }
.tree li li:last-child::before { bottom: auto; height: 8px; }
.grip { height: 6px; flex: none; margin: 0 1px 0 2px; background: radial-gradient(circle, #8ba1bd 1px, transparent 2px) 0 1px/4px 4px repeat-x; background-clip: content-box; padding: 0 96px; border: solid #8d98b0; border-width: 0 1px; }
.side-tab { height: 29px; flex: none; margin: 0 1px 5px 2px; border: 1px solid #8d98b0; text-align: left; padding-left: 3px; color: #1d3c73; background: linear-gradient(#fbd9a5 0 30%, #fdc365 40%, #ffe494 90%, #fff0a5); }

.center { flex: 1; min-width: 0; display: flex; flex-direction: column; border-left: 4px solid #c8d3e8; background: #f3f3f3; }
.tabs { position: relative; height: 23px; flex: none; display: flex; align-items: center; padding: 2px 5px 0 28px; background: #fbfaf6; border-bottom: 1px solid #7d9dbd; }
.tabshape { position: absolute; left: 0; top: 0; width: 192px; height: 23px; }
.tab { position: relative; display: flex; align-items: center; gap: 6px; }
.tab.on { font-weight: bold; margin-left: 15px; font-size: 13px; gap: 7px; }
.tab .x { width: 8px; height: 8px; }
.tabctl { margin-left: auto; }
.tabctl svg { width: 36px; height: 10px; }
.form { flex: 1; min-height: 0; display: flex; flex-direction: column; margin-top: 4px; background: #fcfcfc; border-radius: 0 6px 0 0; }
.form-top { height: 54px; flex: none; display: flex; border-bottom: 1px solid #b0ab98; }
.banner { flex: 1; background: linear-gradient(#8098dc, #5774cc); margin-right: 200px; }
.radios { display: flex; gap: 6px; align-items: center; padding: 23px 13px 0 0; }
.radios label, .cover label { display: flex; align-items: center; gap: 5px; }
.radios input, .cover input { margin: 0; width: 12px; height: 12px; }
.radios input { appearance: none; border: 1px solid #8a8f96; border-radius: 50%; background: radial-gradient(#e8e8e8, #bbb); box-shadow: inset 0 0 0 1px #f4f4f4; }
.radios input:checked { background: radial-gradient(#4fc3ee 15%, #123f66 45%, #e8e8e8 60%); }
.mono { font: 10px/16px "DejaVu Sans Mono", monospace; }
.fields { display: grid; grid-template-columns: auto 137px; justify-content: end; align-items: center; grid-auto-rows: 28px; column-gap: 8px; padding: 5px 6px 0 0; }
.fields label { text-align: right; }
.fields input { height: 21px; width: 137px; border: 1px solid #dfe3ea; border-top-color: #aaadb3; border-radius: 2px; padding: 0 2px 4px; background: #fff; font: 10px/14px "DejaVu Sans Mono", monospace; }
.cover { display: flex; justify-content: flex-end; padding: 34px 16px 12px 0; }
.cover input { appearance: none; width: 13px; height: 13px; border: 1px solid #8a8f96; background: #eef1f5; position: relative; }
.cover input:checked::after { content: ""; position: absolute; left: 3px; top: 0; width: 4px; height: 7px; border: solid #3c58a4; border-width: 0 2px 2px 0; transform: rotate(40deg); }
.editor { flex: 1; min-height: 0; display: grid; grid-template: 1fr 17px / 1fr 16px; margin: 0 14px 0 72px; }
.code { display: flex; background: #fff; }
.gutter { width: 18px; background: #f0f0f0; border-right: 1px solid #999; }
.lines { flex: 1; margin-left: 24px; border-left: 1px dotted #999; }
.hl { height: 16px; background: #ff0; margin-right: 1px; }
.actions { flex: none; display: flex; gap: 5px; padding: 10px 8px 7px 88px; }
.actions .grow { margin-right: -5px; }
.btn { height: 21px; display: flex; align-items: center; border: 1px solid #707070; border-radius: 3px; box-shadow: inset 0 0 0 1px #fafafa; background: linear-gradient(#f3f3f3 0 45%, #dedede 50%, #d0d0d0); padding: 0 2px; }
.btn span { flex: 1; text-align: center; }
.btn svg { margin-right: -16px; }
.btn.w125 svg { margin-right: -2px; }
.w105 { width: 105px; } .w125 { width: 125px; } .w101 { width: 101px; } .w113 { width: 113px; } .w89 { width: 89px; }

.sb { display: flex; background: #f0f0f0; }
.sb.v { flex-direction: column; width: 15px; flex: none; }
.sb i { width: 15px; height: 17px; flex: none; position: relative; }
.sb i::after { content: ""; position: absolute; inset: 0; margin: auto; width: 0; height: 0; border: 4px solid transparent; }
.sb .up::after { border-bottom-color: #333; border-top: 0; height: 4px; }
.sb .dn::after { border-top-color: #333; border-bottom: 0; height: 4px; }
.sb .lt::after { border-right-color: #333; border-left: 0; width: 4px; }
.sb .rt::after { border-left-color: #333; border-right: 0; width: 4px; }
.sb b { flex: 1; border: 1px solid #979797; border-radius: 2px; position: relative; }
.sb.v b { background: linear-gradient(90deg, #f6f6f6, #e4e4e4 45%, #cdcdcd 55%, #c4c4c4); }
.sb.h b { background: linear-gradient(#f6f6f6, #e4e4e4 45%, #cdcdcd 55%, #d6d6d6); }
.sb.v b::after { content: ""; position: absolute; inset: 0; margin: auto; width: 7px; height: 8px; background: repeating-linear-gradient(#555 0 1px, #f4f4f4 1px 3px); }
.sb.h b::after { content: ""; position: absolute; inset: 0; margin: auto; width: 8px; height: 7px; background: repeating-linear-gradient(90deg, #555 0 1px, #f4f4f4 1px 3px); }
.sb.h i { width: 18px; }
.sb.h b { margin: 1px 7px 1px 0; }
.sb.fl b { margin: 14px 0 0; }
.sb.pl b { margin: 2px 0 22px; }

.dock { width: 26px; flex: none; display: flex; flex-direction: column; gap: 4px; padding-top: 3px; align-items: flex-end; }
.dock button { writing-mode: vertical-rl; text-orientation: sideways; width: 24px; padding: 5px 1px 5px 5px; border: 1px solid #6580ac; border-right: 0; border-radius: 4px 0 0 4px; background: linear-gradient(90deg, #f7faff, #cfdff5); color: #1d3c73; }

.status { height: 24px; flex: none; display: flex; align-items: center; gap: 14px; padding: 2px 15px 0 12px; border-top: 1px solid #98a4bb; background: linear-gradient(#fff, #e4edf9 45%, #d6e4f5); color: #1d3c73; white-space: nowrap; }
.st { display: flex; align-items: center; gap: 4px; }

.taskbar { height: 40px; flex: none; display: flex; align-items: center; border-top: 1px solid #42526a; background: linear-gradient(90deg, #8698ae 0, #8da1b9 50px, #a5bddb 75px, #a5bddb 66%, #8296ae 69%); box-shadow: inset 0 1px #bccbdd; }
.task { width: 59px; height: 39px; display: flex; align-items: center; justify-content: center; margin-right: 4px; }
.task svg { width: 32px; height: 32px; }
.task:first-child { width: 54px; }
.task .i38 { width: 38px; height: 38px; }
.task .i36 { width: 36px; height: 36px; }
.task.ie { width: 60px; margin-right: 3px; }
.task.act { border: 1px solid #5b6c84; border-radius: 3px; box-shadow: inset 0 0 0 1px #dce8f4; background: linear-gradient(#c9d9ea, #b3c8e0); margin-right: 3px; }
.task.cur { background: linear-gradient(#e3ebf4, #f2f5f9); margin-right: 2px; }
.tray { display: flex; align-items: center; gap: 8px; }
.tray svg { width: 16px; height: 16px; }
.tray .lang { width: 8px; height: 20px; }
.clock { width: 85px; padding-left: 6px; text-align: center; color: #fff; line-height: 18px; }
.peek { width: 14px; height: 39px; border: 1px solid #4d5d72; border-right: 0; background: linear-gradient(135deg, #a6b3c4, #5f7088); }

.explorer { position: absolute; left: 242px; right: 238px; top: 114px; bottom: 127px; display: flex; flex-direction: column; padding: 0 6px 6px; border: 1px solid #10181f; border-radius: 7px 7px 0 0; box-shadow: inset 0 0 0 1px #7fd8ee; background: linear-gradient(#98b4d3, #b2cbe6 50px, #b9d1ea 80px); color: #1e395b; }
.xtitle { height: 31px; flex: none; display: flex; justify-content: flex-end; gap: 3px; padding: 8px 3px 6px; }
.xtitle button { width: 30px; height: 17px; border: 1px solid #62799a; border-radius: 3px; background: linear-gradient(#c6d8ec 0 45%, #9db8d6 50%, #b9d0e8); box-shadow: inset 0 0 0 1px #dbe7f3; display: flex; justify-content: center; align-items: center; }
.xtitle svg { width: 12px; height: 12px; }
.xtitle .close { border-color: #5c1f1c; box-shadow: inset 0 0 0 1px #e8a89c; background: linear-gradient(#e0a091 0 45%, #bf4a33 50%, #d0705a); }
.xnav { height: 32px; flex: none; display: flex; padding: 0 1px 8px 2px; gap: 6px; }
.backfwd { width: 66px; height: 28px; margin-top: -1px; margin-right: -2px; }
.addr, .search { height: 24px; display: flex; align-items: center; border: 1px solid #6d7f95; background: #ebf2fa; border-radius: 2px; }
.addr { flex: 1; padding-left: 2px; color: #000; }
.addr span:not(.grow) { margin: 0 13px 0 4px; }
.addr button { align-self: stretch; width: 26px; border-left: 1px solid #6d7f95; margin-left: 5px; padding-left: 4px; }
.ar { border: solid transparent; border-width: 4px 0 4px 5px; border-left-color: #000; }
.ad { display: inline-block; border: solid transparent; border-width: 5px 4px 0; border-top-color: #1e395b; }
.search { width: 243px; padding: 0 4px 0 9px; }
.search input { flex: 1; min-width: 0; border: 0; background: none; outline: 0; padding: 0; font-style: italic; }
.search input::placeholder { color: #6d6d6d; opacity: 1; }
.xtool { height: 32px; flex: none; display: flex; align-items: center; gap: 30px; padding: 0 15px 0 18px; margin: 0 1px; border-bottom: 1px solid #a3b5cf; background: linear-gradient(#fafcff, #e9f1fa 45%, #dbe6f4 50%, #dce7f5); }
.xtool button { display: flex; align-items: center; }
.xtool .ad { margin-left: 6px; }
.xtool .wide { margin-left: 8px; }
.xtool .open svg { margin-right: 5px; }
.xtool .p1 { margin-left: -8px; }
.xtool .p2 { margin-left: -10px; }
.xbody { flex: 1; min-height: 0; display: flex; margin: 0 1px; background: #fcfcfc; color: #000; }
.places { width: 141px; flex: none; overflow: hidden; padding-top: 9px; }
.places ul { margin-bottom: 23px; }
.places li { height: 23px; display: flex; align-items: center; gap: 5px; padding-left: 30px; white-space: nowrap; }
.places .h { padding-left: 20px; }
.places svg { width: 16px; height: 16px; }
.files { flex: 1; min-width: 0; overflow: hidden; margin-left: 2px; border-left: 1px solid #d6e3f2; padding-left: 15px; }
.grid { display: grid; grid-template-columns: 250px 250px; grid-template-rows: 54px 54px 54px 60px 60px 60px 58px; gap: 2px 4px; margin-top: -10px; }
.f { display: flex; align-items: center; gap: 5px; padding: 0 3px; border: 1px solid transparent; white-space: nowrap; }
.f svg { width: 48px; height: 48px; }
.f p { margin: 0; line-height: 18px; }
.f small { display: block; font-size: 12px; color: #6d6d6d; }
.f.sel { border-color: #84acdd; border-radius: 3px; background: linear-gradient(#e3effd, #c1dbfc); }
.xinfo { height: 53px; flex: none; display: flex; margin: 0 1px; padding: 2px 18px; border-top: 1px solid #d3deee; background: #f1f5fb; line-height: 18px; white-space: nowrap; color: #5a6779; overflow: hidden; }
.xinfo svg { width: 46px; height: 46px; }
.xinfo > div { padding-top: 2px; }
.dname { display: flex; flex-direction: column; margin-left: 13px; }
.dname strong { font-size: 13px; font-weight: normal; color: #000; }
.dmeta { display: grid; grid-template-columns: auto auto; align-content: start; column-gap: 4px; margin-left: 6px; }
.dmeta span { text-align: right; }
.xinfo em { color: #1e395b; }
.dmade { margin-left: 48px; }
.tip { position: absolute; left: 574px; top: 590px; padding: 1px 10px 3px 5px; border: 1px solid #767676; border-radius: 3px; background: linear-gradient(#fff, #e4e5f0); box-shadow: 3px 3px 3px rgba(0, 0, 0, .45); color: #575757; line-height: 17px; white-space: nowrap; }
.mark { position: absolute; border: 5px solid #ed1c24; pointer-events: none; }
.m1 { left: 415px; top: 544px; width: 267px; height: 82px; }
.m2 { left: 660px; top: 702px; width: 171px; height: 33px; }
```
